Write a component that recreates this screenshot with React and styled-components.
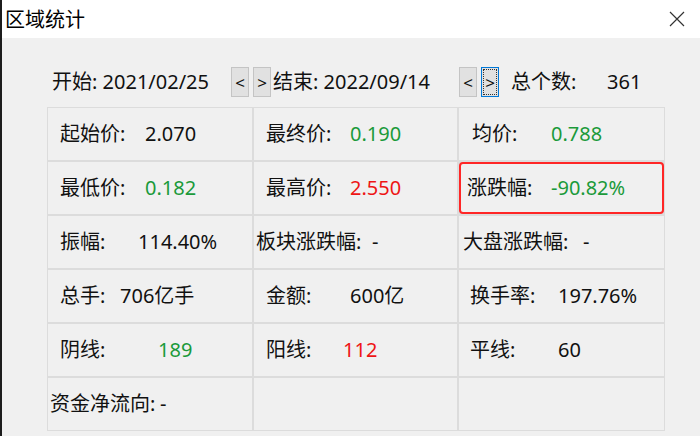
import React from 'react'
import styled, { createGlobalStyle } from 'styled-components'

const Global = createGlobalStyle`
  html, body {
    margin: 0;
    padding: 0;
    background: #f0f0f0;
  }
  body {
    font-family: "Noto Sans", "Noto Sans CJK SC", sans-serif;
  }
`

const Window = styled.div`
  width: 700px;
  height: 436px;
  box-sizing: border-box;
  border-left: 2px solid #1c1c1c;
  background: #f0f0f0;
  overflow: hidden;
  display: flex;
  flex-direction: column;
`

const TitleBar = styled.div`
  height: 38px;
  flex: none;
  background: #fff;
  display: flex;
  align-items: center;
  justify-content: space-between;
  padding: 0 15px 0 3px;
  font-family: "Noto Sans CJK SC", sans-serif;
  font-size: 20px;
  color: #000;
  line-height: 1;
`

const Body = styled.div`
  padding: 29px 0 0 45px;
`

const Header = styled.div`
  display: flex;
  align-items: center;
  height: 30px;
  font-size: 20px;
  color: #111;
  line-height: 1;
  padding-left: 5px;
`

const HeadText = styled.span`
  width: ${p => p.w}px;
  margin-left: ${p => p.ml || 0}px;
  flex: none;
  white-space: pre;
`

const Stepper = styled.div`
  display: flex;
  gap: 4px;
  flex: none;
`

const StepButton = styled.button`
  width: 18px;
  height: 30px;
  padding: 0;
  box-sizing: border-box;
  background: #e1e1e1;
  border: 1px solid ${p => (p.focused ? '#0078d7' : '#c4c4c4')};
  outline: ${p => (p.focused ? '1px dotted #333' : 'none')};
  outline-offset: -3px;
  font-family: "Noto Sans", sans-serif;
  font-size: 17px;
  color: #111;
  line-height: 1;
`

const Grid = styled.div`
  margin-top: 10px;
  width: 618px;
  display: grid;
  grid-template-columns: 204px 203px 205px;
  grid-auto-rows: 52px;
  gap: 2px;
  padding: 1px;
  box-sizing: border-box;
  background: #dcdcdc;
`

const Cell = styled.div`
  background: #f0f0f0;
  display: flex;
  align-items: center;
  box-sizing: border-box;
  padding-left: ${p => p.pad}px;
  font-size: 20px;
  line-height: 1;
  color: #111;
  white-space: nowrap;
  ${p => p.hl && `
    border: 2px solid #ff2626;
    border-radius: 4px;
    padding-left: ${p.pad - 2}px;
  `}
`

const Label = styled.span`
  width: ${p => p.w}px;
  flex: none;
`

const Value = styled.span`
  color: ${p => (p.tone === 'up' ? '#ee1515' : p.tone === 'down' ? '#1b9a3a' : '#111')};
`

const cells = [
  { label: '起始价:', value: '2.070', pad: 12, w: 85 },
  { label: '最终价:', value: '0.190', pad: 12, w: 84, tone: 'down' },
  { label: '均价:', value: '0.788', pad: 13, w: 79, tone: 'down' },
  { label: '最低价:', value: '0.182', pad: 12, w: 85, tone: 'down' },
  { label: '最高价:', value: '2.550', pad: 12, w: 84, tone: 'up' },
  { label: '涨跌幅:', value: '-90.82%', pad: 8, w: 84, tone: 'down', hl: true },
  { label: '振幅:', value: '114.40%', pad: 12, w: 78 },
  { label: '板块涨跌幅:', value: '-', pad: 2, w: 116 },
  { label: '大盘涨跌幅:', value: '-', pad: 4, w: 120 },
  { label: '总手:', value: '706亿手', pad: 12, w: 60 },
  { label: '金额:', value: '600亿', pad: 12, w: 84 },
  { label: '换手率:', value: '197.76%', pad: 11, w: 88 },
  { label: '阴线:', value: '189', pad: 12, w: 98, tone: 'down' },
  { label: '阳线:', value: '112', pad: 12, w: 77, tone: 'up' },
  { label: '平线:', value: '60', pad: 11, w: 88 },
  { label: '资金净流向:', value: '-', pad: 2, w: 110 },
  { label: '', value: '', pad: 0, w: 0 },
  { label: '', value: '', pad: 0, w: 0 },
]

const CloseIcon = () => (
  <svg width="16" height="16" viewBox="0 0 16 16">
    <path d="M1 1 L15 15 M15 1 L1 15" stroke="#333" strokeWidth="1.2" fill="none" />
  </svg>
)

export default function App() {
  return (
    <>
      <Global />
      <Window>
        <TitleBar>
          <span>区域统计</span>
          <CloseIcon />
        </TitleBar>
        <Body>
          <Header>
            <HeadText w={179}>开始: 2021/02/25</HeadText>
            <Stepper>
              <StepButton>&lt;</StepButton>
              <StepButton>&gt;</StepButton>
            </Stepper>
            <HeadText w={186} ml={2}>结束: 2022/09/14</HeadText>
            <Stepper>
              <StepButton>&lt;</StepButton>
              <StepButton focused>&gt;</StepButton>
            </Stepper>
            <HeadText w={96} ml={12}>总个数:</HeadText>
            <HeadText>361</HeadText>
          </Header>
          <Grid>
            {cells.map((c, i) => (
              <Cell key={i} pad={c.pad} hl={c.hl}>
                <Label w={c.w}>{c.label}</Label>
                <Value tone={c.tone}>{c.value}</Value>
              </Cell>
            ))}
          </Grid>
        </Body>
      </Window>
    </>
  )
}
